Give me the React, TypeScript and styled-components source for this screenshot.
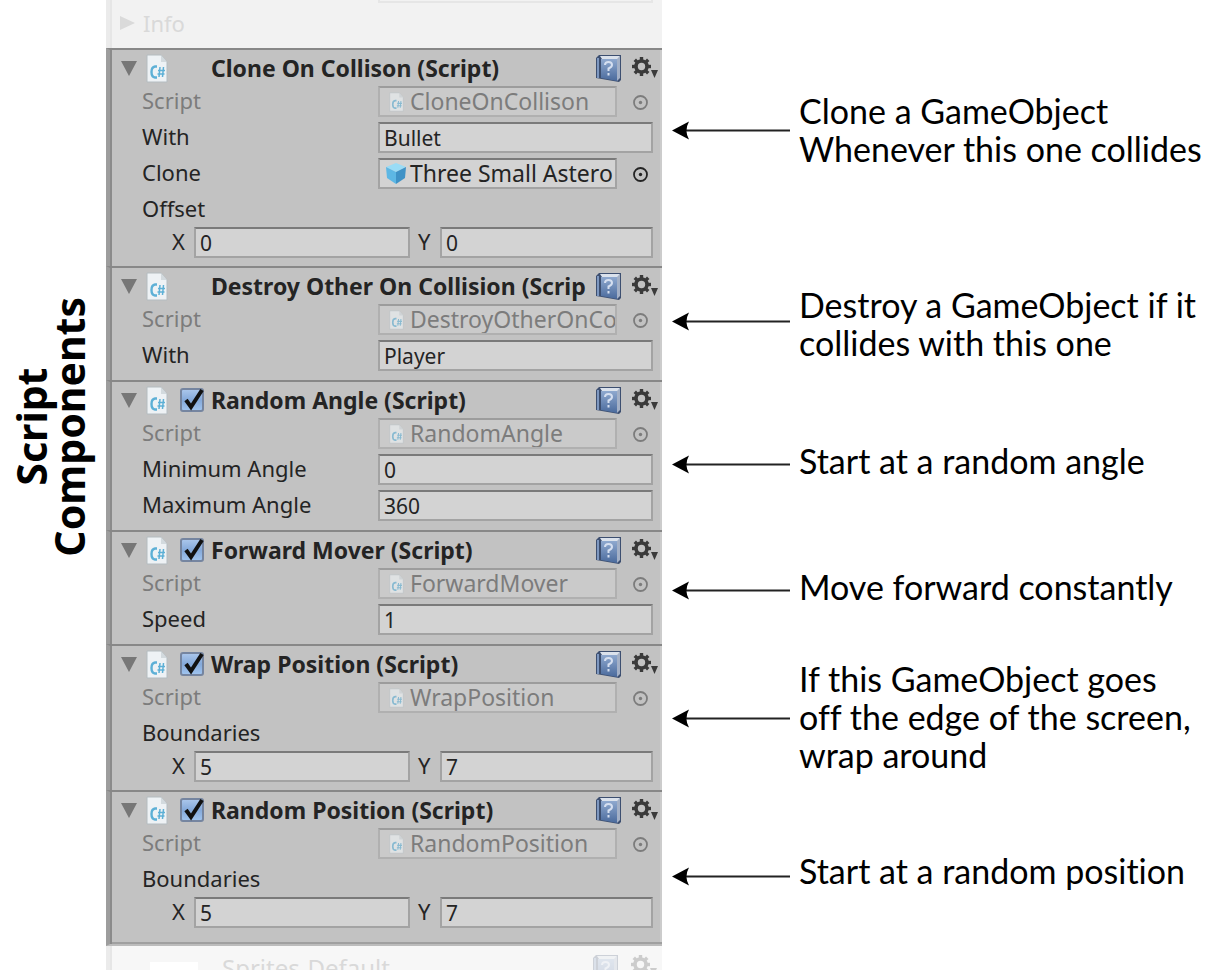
import React from "react";
import styled, { createGlobalStyle, css } from "styled-components";

const GlobalStyle = createGlobalStyle`
  *, *::before, *::after { box-sizing: border-box; }
  html, body { margin: 0; background: #fff; }
  button, input { font: inherit; color: inherit; margin: 0; }
`;

const Page = styled.main`
  display: grid;
  grid-template-columns: 106px minmax(0, 1fr);
  height: 100vh;
  overflow: hidden;
`;

const SideLabel = styled.h1`
  margin: 0;
  padding: 0 12px 297px 0;
  justify-self: start;
  align-self: start;
  writing-mode: vertical-rl;
  transform: rotate(180deg);
  font: 700 41px/38px "Noto Sans", "Open Sans", sans-serif;
  text-align: center;
  white-space: nowrap;
`;

const Board = styled.div`
  min-width: 0;
`;

const BoardRow = styled.div`
  display: grid;
  grid-template-columns: minmax(0, 556fr) minmax(0, 554fr);
`;

const PanelCell = styled.section<{ $faded?: "top" | "bottom"; $last?: boolean }>`
  font-family: "Noto Sans", "Open Sans", sans-serif;
  font-size: 22px;
  line-height: 28px;
  color: #242424;
  background: #c2c2c2;
  border-left: 4px solid #9d9d9d;
  box-shadow: inset 2px 0 #8b8b8b, inset -2px 0 #cccccc;
  ${(p) =>
    !p.$faded &&
    css`
      border-top: 2px solid #888;
      padding: 0 9px 7px 32px;
    `}
  ${(p) =>
    p.$last &&
    css`
      padding-bottom: 15px;
      border-bottom: 2px solid #bcbcbc;
      box-shadow: inset 2px 0 #8b8b8b, inset 0 -2px #a0a0a0, inset -2px 0 #cccccc;
    `}
  ${(p) =>
    p.$faded &&
    css`
      background: ${p.$faded === "top" ? "#f2f2f2" : "#f7f7f7"};
      border-left-color: #ebebeb;
      box-shadow: inset 2px 0 #e6e6e6;
      color: #d9d9d9;
      overflow: hidden;
    `}
`;

const TopStub = styled.div`
  display: flex;
  flex-direction: column;
  height: 48px;
  padding: 0 9px 0 9px;
`;

const StubField = styled.div`
  align-self: flex-end;
  width: 275px;
  height: 3px;
  border: solid #e6e6e6;
  border-width: 0 2px 2px;
`;

const StubFold = styled.button`
  display: flex;
  align-items: center;
  gap: 6px;
  height: 40px;
  padding: 0;
  border: 0;
  background: none;
`;

const BottomStub = styled.div`
  display: flex;
  align-items: flex-start;
  height: 24px;
  padding: 8px 4px 0 40px;
`;

const Swatch = styled.span`
  width: 48px;
  height: 24px;
  margin-top: 8px;
  margin-right: 24px;
  background: #fff;
`;

const StubTitle = styled.span`
  flex: 1;
  font-size: 24px;
  white-space: nowrap;
`;

const FadedTools = styled.span`
  display: flex;
  gap: 11px;
  opacity: 0.22;
`;

const Header = styled.header`
  display: flex;
  align-items: center;
  height: 33px;
  margin: 0 -9px 0 -22px;
  padding: 3px 3px 0 0;
`;

const IconButton = styled.button`
  display: flex;
  flex: none;
  padding: 0;
  border: 0;
  background: none;
`;

const TitleLabel = styled.label`
  display: flex;
  flex: 1;
  align-items: center;
  min-width: 0;
  margin-left: 8px;
`;

const TickSlot = styled.span`
  position: relative;
  flex: none;
  width: 28px;
  height: 28px;
  margin: 0 3px 0 12px;
`;

const Tick = styled.input`
  appearance: none;
  display: block;
  width: 24px;
  height: 24px;
  margin: 2px 0 0 0;
  border: 2px solid #7585a0;
  border-radius: 3px;
  background: linear-gradient(#a9c5ea, #84a9da 50%, #9fc3ee);
`;

const TickMark = styled.svg`
  position: absolute;
  inset: 0;
  pointer-events: none;
`;

const Title = styled.span`
  flex: 1;
  min-width: 0;
  font-size: 23px;
  font-weight: 700;
  white-space: nowrap;
`;

const Tools = styled.div`
  display: flex;
  align-items: center;
  flex: none;
  gap: 9px;
  margin-left: 8px;
`;

const Row = styled.div<{ $dim?: boolean }>`
  display: grid;
  grid-template-columns: 236px minmax(0, 1fr);
  height: 36px;
  padding-top: 3px;
  color: ${(p) => (p.$dim ? "#7c7c7c" : "inherit")};
`;

const Field = styled.input`
  width: 100%;
  min-width: 0;
  height: 31px;
  padding: 0 4px;
  border: 2px solid #a3a3a3;
  border-top-color: #7a7a7a;
  border-radius: 0;
  background: #d3d3d3;
  font-size: 21px;
  outline: 0;
`;

const ObjectLine = styled.div`
  display: grid;
  grid-template-columns: minmax(0, 1fr) 36px;
`;

const ObjectField = styled.button<{ $dim?: boolean }>`
  display: flex;
  align-items: center;
  gap: 3px;
  height: 31px;
  padding: 0 0 0 5px;
  border: 2px solid ${(p) => (p.$dim ? "#b0b0b0" : "#a3a3a3")};
  border-top-color: ${(p) => (p.$dim ? "#9c9c9c" : "#7a7a7a")};
  background: ${(p) => (p.$dim ? "#cacaca" : "#d3d3d3")};
  color: inherit;
  font-size: 23px;
  text-align: left;
  white-space: nowrap;
  overflow: hidden;
`;

const ObjectIcon = styled.span`
  display: flex;
  flex: none;
  justify-content: center;
  width: 22px;
`;

const ObjectName = styled.span`
  flex: 1;
  min-width: 0;
  padding-bottom: 1px;
`;

const Picker = styled.button`
  display: flex;
  align-items: center;
  padding: 0 0 0 15px;
  border: 0;
  background: none;
  color: inherit;
`;

const VectorRow = styled.div`
  display: grid;
  grid-template-columns: 238fr 235fr;
  column-gap: 8px;
  height: 32px;
  margin-left: 30px;
`;

const Axis = styled.label`
  display: grid;
  grid-template-columns: 22px minmax(0, 1fr);
`;

const Note = styled.aside`
  display: flex;
  align-items: flex-start;
  padding-left: 10px;
`;

const ArrowSlot = styled.span<{ $top: number }>`
  flex: none;
  width: 118px;
  margin-right: 9px;
  padding-top: ${(p) => p.$top}px;
`;

const NoteText = styled.p<{ $top: number }>`
  margin: 0;
  padding-top: ${(p) => p.$top}px;
  font: 400 34px/38px Lato, "Open Sans", sans-serif;
  font-variant-ligatures: none;
  color: #000;
  white-space: pre;
`;

const Fold = ({ open = true }: { open?: boolean }) => (
  <svg width="18" height="17" viewBox="0 0 18 17" aria-hidden="true">
    {open ? <path d="M1 1h16L9 16z" fill="#777" /> : <path d="M1 1v14l15-7z" fill="#dadada" />}
  </svg>
);

const ScriptIcon = ({ small = false }: { small?: boolean }) => (
  <svg width={small ? 15 : 22} height={small ? 20 : 29} viewBox="0 0 22 29" opacity={small ? 0.6 : 1} aria-hidden="true">
    <path d="M1 1h14l6 7v20H1z" fill="#eef2f5" stroke="#b4bcc0" strokeWidth="1" />
    <path d="M15 1v7h6z" fill="#d3dade" />
    <path d="M11 12.500H9Q5.500 13 5.500 18T9 23.500H11" fill="none" stroke="#5db0d6" strokeWidth="2.400" />
    <path d="M14 13l-1 10M17.500 13l-1 10M12 16.500h7M11.500 20h7" stroke="#5db0d6" strokeWidth="1.500" />
  </svg>
);

const CubeIcon = () => (
  <svg width="22" height="21" viewBox="0 0 22 21" aria-hidden="true">
    <path d="M11 0l10 4-10 5L1 4z" fill="#9adcf6" />
    <path d="M1 4l10 5v12L2 15z" fill="#5db7e4" />
    <path d="M21 4L11 9v12l9-6z" fill="#3f92c6" />
  </svg>
);

const HelpIcon = () => (
  <svg width="27" height="29" viewBox="0 0 27 29" aria-hidden="true">
    <defs>
      <linearGradient id="book" x1="0" y1="0" x2="0" y2="1">
        <stop offset="0" stopColor="#8fa9cf" />
        <stop offset="1" stopColor="#4a6a9c" />
      </linearGradient>
    </defs>
    <path d="M1 4L4 1h22v25l-2 2L1 24z" fill="#3d4f70" />
    <path d="M5 2h20l-2 3H7z" fill="#dbe2ec" />
    <path d="M22 5l3-3v22l-3 3z" fill="#a3b0c6" />
    <path d="M6 5h16v22L6 24z" fill="url(#book)" />
    <path d="M3 4v20" stroke="#7d97c0" strokeWidth="2" />
    <path d="M10 11q0-3 3.500-3t3.500 3q0 2-3.500 3.500v2.500M13.500 19v2.500" fill="none" stroke="#d5dff0" strokeWidth="2" />
  </svg>
);

const GearIcon = () => (
  <svg width="28" height="24" viewBox="0 0 28 24" aria-hidden="true">
    <circle cx="10.500" cy="10.500" r="5.500" fill="none" stroke="#3a3a3a" strokeWidth="3.600" />
    {[0, 45, 90, 135, 180, 225, 270, 315].map((a) => (
      <path key={a} d="M8.800 1h3.400v4H8.800z" fill="#3a3a3a" transform={`rotate(${a} 10.500 10.500)`} />
    ))}
    <path d="M20 14h7l-3.500 8z" fill="#3a3a3a" />
  </svg>
);

const PickerIcon = () => (
  <svg width="17" height="17" viewBox="0 0 17 17" aria-hidden="true">
    <circle cx="8.500" cy="8.500" r="6.500" fill="none" stroke="currentColor" strokeWidth="1.800" />
    <circle cx="8.500" cy="8.500" r="1.700" fill="currentColor" />
  </svg>
);

const ArrowShape = styled.svg`
  display: block;
`;

const Arrow = () => (
  <ArrowShape width="118" height="20" viewBox="0 0 118 20" aria-hidden="true">
    <path d="M12 10.500H118" stroke="#222" strokeWidth="2" />
    <path d="M0 10.500L17 1.500Q12 10.500 17 19.500z" fill="#000" />
  </ArrowShape>
);

type Prop =
  | { kind: "text"; label: string; value: string }
  | { kind: "object"; label: string; value: string }
  | { kind: "vector"; label: string; x: string; y: string };

interface Script {
  title: string;
  script: string;
  toggle: boolean;
  props: Prop[];
  note: string;
  arrowTop: number;
  textTop: number;
}

const scripts: Script[] = [
  {
    title: "Clone On Collison (Script)",
    script: "CloneOnCollison",
    toggle: false,
    props: [
      { kind: "text", label: "With", value: "Bullet" },
      { kind: "object", label: "Clone", value: "Three Small Astero" },
      { kind: "vector", label: "Offset", x: "0", y: "0" },
    ],
    note: "Clone a GameObject\nWhenever this one collides",
    arrowTop: 72,
    textTop: 44,
  },
  {
    title: "Destroy Other On Collision (Scrip",
    script: "DestroyOtherOnCo",
    toggle: false,
    props: [{ kind: "text", label: "With", value: "Player" }],
    note: "Destroy a GameObject if it\ncollides with this one",
    arrowTop: 45,
    textTop: 20,
  },
  {
    title: "Random Angle (Script)",
    script: "RandomAngle",
    toggle: true,
    props: [
      { kind: "text", label: "Minimum Angle", value: "0" },
      { kind: "text", label: "Maximum Angle", value: "360" },
    ],
    note: "Start at a random angle",
    arrowTop: 74,
    textTop: 62,
  },
  {
    title: "Forward Mover (Script)",
    script: "ForwardMover",
    toggle: true,
    props: [{ kind: "text", label: "Speed", value: "1" }],
    note: "Move forward constantly",
    arrowTop: 50,
    textTop: 38,
  },
  {
    title: "Wrap Position (Script)",
    script: "WrapPosition",
    toggle: true,
    props: [{ kind: "vector", label: "Boundaries", x: "5", y: "7" }],
    note: "If this GameObject goes\noff the edge of the screen,\nwrap around",
    arrowTop: 64,
    textTop: 16,
  },
  {
    title: "Random Position (Script)",
    script: "RandomPosition",
    toggle: true,
    props: [{ kind: "vector", label: "Boundaries", x: "5", y: "7" }],
    note: "Start at a random position",
    arrowTop: 76,
    textTop: 62,
  },
];

const ObjectRow = ({ label, value, dim = false }: { label: string; value: string; dim?: boolean }) => (
  <Row $dim={dim}>
    <span>{label}</span>
    <ObjectLine>
      <ObjectField type="button" disabled={dim} $dim={dim} aria-label={`${label}: ${value}`}>
        <ObjectIcon>{dim ? <ScriptIcon small /> : <CubeIcon />}</ObjectIcon>
        <ObjectName>{value}</ObjectName>
      </ObjectField>
      <Picker type="button" disabled={dim} aria-label={`Pick ${label}`}>
        <PickerIcon />
      </Picker>
    </ObjectLine>
  </Row>
);

const PropertyRow = ({ prop, id }: { prop: Prop; id: string }) => {
  if (prop.kind === "object") return <ObjectRow label={prop.label} value={prop.value} />;
  if (prop.kind === "text")
    return (
      <Row>
        <label htmlFor={id}>{prop.label}</label>
        <Field id={id} defaultValue={prop.value} />
      </Row>
    );
  return (
    <>
      <Row>
        <span>{prop.label}</span>
      </Row>
      <VectorRow>
        <Axis>
          X
          <Field defaultValue={prop.x} />
        </Axis>
        <Axis>
          Y
          <Field defaultValue={prop.y} />
        </Axis>
      </VectorRow>
    </>
  );
};

const ScriptPanel = ({ item, last }: { item: Script; last: boolean }) => (
  <PanelCell $last={last}>
    <Header>
      <IconButton type="button" aria-label={`Fold ${item.script}`}>
        <Fold />
      </IconButton>
      <TitleLabel>
        <ScriptIcon />
        <TickSlot>
          {item.toggle && (
            <>
              <Tick type="checkbox" defaultChecked />
              <TickMark width="28" height="28" viewBox="0 0 28 28" aria-hidden="true">
                <path d="M6 14l5 7L22 4" fill="none" stroke="#111" strokeWidth="4" />
              </TickMark>
            </>
          )}
        </TickSlot>
        <Title>{item.title}</Title>
      </TitleLabel>
      <Tools>
        <IconButton type="button" aria-label="Help">
          <HelpIcon />
        </IconButton>
        <IconButton type="button" aria-label="Settings">
          <GearIcon />
        </IconButton>
      </Tools>
    </Header>
    <ObjectRow label="Script" value={item.script} dim />
    {item.props.map((prop, i) => (
      <PropertyRow key={i} prop={prop} id={`${item.script}-${i}`} />
    ))}
  </PanelCell>
);

export default function App() {
  return (
    <Page>
      <GlobalStyle />
      <SideLabel>
        Script
        <br />
        Components
      </SideLabel>
      <Board>
        <BoardRow>
          <PanelCell $faded="top">
            <TopStub>
              <StubField />
              <StubFold type="button">
                <Fold open={false} />
                Info
              </StubFold>
            </TopStub>
          </PanelCell>
        </BoardRow>
        {scripts.map((item, i) => (
          <BoardRow key={item.script}>
            <ScriptPanel item={item} last={i === scripts.length - 1} />
            <Note>
              <ArrowSlot $top={item.arrowTop}>
                <Arrow />
              </ArrowSlot>
              <NoteText $top={item.textTop}>{item.note}</NoteText>
            </Note>
          </BoardRow>
        ))}
        <BoardRow>
          <PanelCell $faded="bottom">
            <BottomStub>
              <Swatch />
              <StubTitle>Sprites-Default</StubTitle>
              <FadedTools>
                <HelpIcon />
                <GearIcon />
              </FadedTools>
            </BottomStub>
          </PanelCell>
        </BoardRow>
      </Board>
    </Page>
  );
}
